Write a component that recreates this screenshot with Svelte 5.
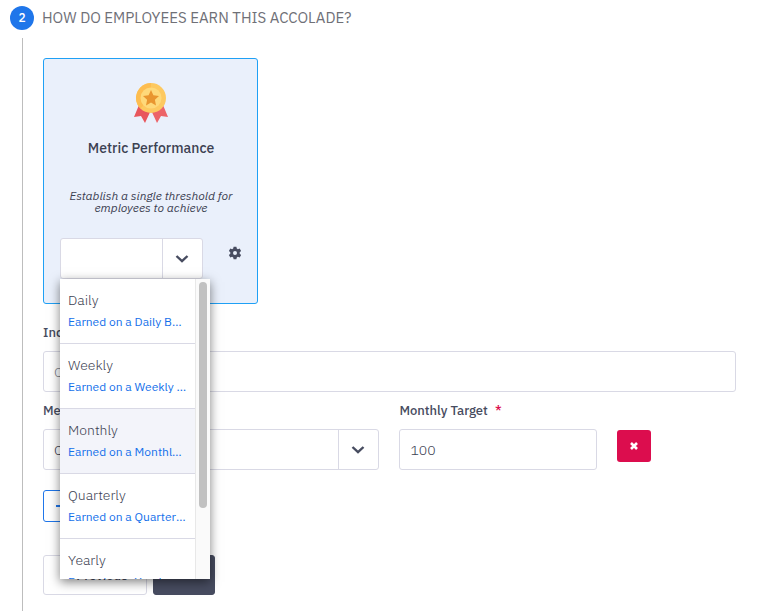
<script lang="ts">
  type Frequency = { name: string; detail: string };

  const frequencies: Frequency[] = [
    { name: "Daily", detail: "Earned on a Daily Basis" },
    { name: "Weekly", detail: "Earned on a Weekly Basis" },
    { name: "Monthly", detail: "Earned on a Monthly Basis" },
    { name: "Quarterly", detail: "Earned on a Quarterly Basis" },
    { name: "Yearly", detail: "Earned on a Yearly Basis" },
    { name: "One Time", detail: "Earned Only Once" },
  ];

  let open = $state(true);
  let frequency = $state("");
  let highlighted = $state("Monthly");
  let target = $state("100");

  // Scroll position and sizes of the open list, for its scrollbar
  let list: HTMLElement | undefined = $state();
  let thumbSize = $state(100);
  let thumbTop = $state(0);

  function updateThumb() {
    if (!list) return;
    thumbSize = (list.clientHeight / list.scrollHeight) * 100;
    thumbTop = (list.scrollTop / list.scrollHeight) * 100;
  }

  $effect(updateThumb);

  // Open our own list instead of the native popup
  function toggle(event: MouseEvent) {
    event.preventDefault();
    open = !open;
  }

  function choose(item: Frequency) {
    frequency = item.name;
    open = false;
  }
</script>

{#snippet chevron()}
  <span class="chevron">
    <svg width="14" height="10" viewBox="0 0 14 10" aria-hidden="true">
      <path d="M1.500 2 7 7.200 12.500 2" fill="none" stroke="currentColor" stroke-width="2.400" />
    </svg>
  </span>
{/snippet}

<section class="step">
  <header>
    <span class="number">2</span>
    <h2>HOW DO EMPLOYEES EARN THIS ACCOLADE?</h2>
  </header>

  <form class="body" onsubmit={(e) => e.preventDefault()}>
    <div class="card">
      <svg class="medal" width="40" height="40" viewBox="0 0 40 40" aria-hidden="true">
        <path d="M8 22 3 34l7-1 4 7 6-13z" fill="#e8565c" />
        <path d="M32 22l5 12-7-1-4 7-6-13z" fill="#ec6468" />
        <circle cx="20" cy="15" r="15" fill="#fdc960" />
        <path d="M9.400 25.600A15 15 0 0 1 20 0v15z" fill="#fdbd50" />
        <circle cx="20" cy="15" r="10.500" fill="#fed97a" />
        <path d="m20 7 2.400 5.200 5.600.700-4.100 3.900 1.100 5.600-5-2.800-5 2.800 1.100-5.600-4.100-3.900 5.600-.700z" fill="#e9962f" />
      </svg>
      <h3>Metric Performance</h3>
      <p>Establish a single threshold for employees to achieve</p>

      <div class="frequency">
        <div class="picker">
          <div class="select">
            <select aria-label="Frequency" bind:value={frequency} onmousedown={toggle}>
              <option value=""></option>
              {#each frequencies as item}
                <option>{item.name}</option>
              {/each}
            </select>
            {@render chevron()}
          </div>
          {#if open}
            <div class="menu">
              <div class="options" bind:this={list} onscroll={updateThumb}>
                {#each frequencies as item}
                  <button
                    type="button"
                    class="option"
                    class:active={item.name === highlighted}
                    onmouseenter={() => (highlighted = item.name)}
                    onclick={() => choose(item)}
                  >
                    <span class="name">{item.name}</span>
                    <span class="detail">{item.detail}</span>
                  </button>
                {/each}
              </div>
              <div class="scrollbar">
                <div class="track">
                  <div class="thumb" style="height: {thumbSize}%; top: {thumbTop}%"></div>
                </div>
              </div>
            </div>
          {/if}
        </div>
        <button type="button" class="settings" aria-label="Settings">
          <svg width="14" height="14" viewBox="0 0 14 14" aria-hidden="true">
            <path
              fill="currentColor"
              fill-rule="evenodd"
              d="M5.600.800h2.800l.400 1.800 1.100.600 1.800-.600 1.400 2.400-1.400 1.300v1.400l1.400 1.300-1.400 2.400-1.800-.600-1.100.600-.400 1.800H5.600l-.400-1.800-1.100-.600-1.800.600L.900 9l1.400-1.300V6.300L.900 5l1.400-2.400 1.800.600 1.100-.600zM7 5a2 2 0 1 0 0 4 2 2 0 0 0 0-4z"
            />
          </svg>
        </button>
      </div>
    </div>

    <div class="field">
      <label for="individual">Individual</label>
      <input id="individual" type="text" placeholder="Choose" />
    </div>

    <div class="metric-row">
      <div class="field">
        <label for="metric">Metric</label>
        <div class="select">
          <select id="metric">
            <option>Calls</option>
          </select>
          {@render chevron()}
        </div>
      </div>
      <div class="field">
        <label for="target">Monthly Target <span class="required">*</span></label>
        <input id="target" type="text" bind:value={target} />
      </div>
      <button type="button" class="remove" aria-label="Remove metric">
        <svg width="10" height="10" viewBox="0 0 10 10" aria-hidden="true">
          <path d="m2 2 6 6M8 2 2 8" stroke="currentColor" stroke-width="2.600" />
        </svg>
      </button>
    </div>

    <button type="button" class="add" aria-label="Add metric">
      <svg width="12" height="12" viewBox="0 0 12 12" aria-hidden="true">
        <path d="M6 1v10M0 6h12" stroke="currentColor" stroke-width="2" />
      </svg>
    </button>

    <div class="actions">
      <button type="button" class="previous">← Previous</button>
      <button type="submit" class="save" aria-label="Save">
        <svg width="14" height="12" viewBox="0 0 14 12" aria-hidden="true">
          <path d="m2 5 4 4 6-7" fill="none" stroke="currentColor" stroke-width="2" />
        </svg>
      </button>
    </div>
  </form>
</section>

<style>
  :global(body) {
    margin: 0;
    background: #fff;
  }

  .step {
    padding: 6px 23px 0 10px;
    font-family: "IBM Plex Sans", Roboto, "Liberation Sans", sans-serif;
    font-size: 14px;
    color: #474c60;
  }

  .step,
  .step * {
    box-sizing: border-box;
  }

  header {
    display: flex;
    align-items: center;
    gap: 8px;
  }

  .number {
    width: 24px;
    height: 24px;
    border-radius: 50%;
    background: #1f76ea;
    color: #fff;
    font-size: 12px;
    font-weight: 500;
    line-height: 24px;
    text-align: center;
  }

  h2 {
    margin: 0;
    font-size: 15px;
    font-weight: 400;
    line-height: 24px;
    color: #6f7077;
  }

  .body {
    margin: 8px 0 0 12px;
    padding: 20px 0 16px 20px;
    border-left: 1px solid #bdbdbd;
  }

  .card {
    width: 215px;
    height: 246px;
    padding: 24px 15px 24px 16px;
    border: 1px solid #1fa0f5;
    border-radius: 3px;
    background: #eaf0fb;
    text-align: center;
  }

  .medal {
    display: block;
    margin: 0 auto;
  }

  h3 {
    margin: 15px 0 0;
    font-size: 14px;
    font-weight: 500;
    line-height: 20px;
    color: #3c4152;
  }

  p {
    margin: 32px 0 24px;
    font-size: 12px;
    font-style: italic;
    line-height: 12px;
    color: #3c4152;
  }

  .frequency {
    display: flex;
    justify-content: space-between;
    align-items: flex-start;
  }

  .picker {
    position: relative;
    width: 143px;
  }

  input,
  select {
    display: block;
    width: 100%;
    height: 41px;
    padding: 0 10px;
    border: 1px solid #d9d9e5;
    border-radius: 3px;
    background: #fff;
    color: #3c4152;
    font: inherit;
    font-weight: 300;
    appearance: none;
  }

  input::placeholder {
    color: #7c7f8d;
  }

  .select {
    display: grid;
  }

  .select > * {
    grid-area: 1 / 1;
  }

  .chevron {
    justify-self: end;
    display: flex;
    align-items: center;
    justify-content: center;
    width: 41px;
    padding-right: 2px;
    border-left: 1px solid #d9d9e5;
    pointer-events: none;
  }

  .menu {
    position: absolute;
    z-index: 1;
    top: 100%;
    left: 0;
    display: flex;
    width: 150px;
    height: 300px;
    background: #fff;
    box-shadow: 0 3px 10px rgba(0, 0, 0, 0.5);
  }

  .options {
    flex: 1;
    min-width: 0;
    overflow-y: scroll;
    scrollbar-width: none;
  }

  .scrollbar {
    width: 15px;
    padding: 3px;
    border-left: 1px solid #e8e8e8;
    background: #fafafa;
  }

  .track {
    position: relative;
    height: 100%;
  }

  .thumb {
    position: absolute;
    width: 8px;
    border-radius: 4px;
    background: #c1c1c1;
  }

  .option {
    display: block;
    width: 100%;
    height: 65px;
    padding: 10px 8px;
    border: 0;
    border-bottom: 1px solid #d9d9e5;
    background: #fff;
    font: inherit;
    text-align: left;
    cursor: pointer;
  }

  .option.active {
    background: #f3f4fa;
  }

  .name,
  .detail {
    display: block;
    line-height: 22px;
  }

  .name {
    color: #3c4152;
    font-weight: 300;
  }

  .detail {
    overflow: hidden;
    font-size: 12px;
    color: #1470ea;
    text-overflow: ellipsis;
    white-space: nowrap;
  }

  .settings {
    margin-top: 8px;
    padding: 0;
    border: 0;
    background: none;
    color: #474c60;
    line-height: 0;
  }

  .field {
    margin-top: 19px;
  }

  label {
    display: block;
    margin-bottom: 8px;
    font-size: 13px;
    font-weight: 500;
    line-height: 20px;
  }

  .required {
    margin-left: 4px;
    color: #dc0d4e;
  }

  .metric-row {
    display: grid;
    grid-template-columns: 17fr 10fr 6fr;
    gap: 20px;
    margin-top: 9px;
  }

  .metric-row .field {
    margin: 0;
  }

  .remove {
    width: 34px;
    height: 32px;
    margin-top: 29px;
    padding: 0;
    border: 0;
    border-radius: 3px;
    background: #dc0d4e;
    color: #fff;
  }

  .add {
    display: block;
    height: 32px;
    margin-top: 20px;
    padding: 0 12px;
    border: 1px solid #1f76ea;
    border-radius: 3px;
    background: #fff;
    color: #1f76ea;
    line-height: 0;
  }

  .actions {
    display: flex;
    gap: 6px;
    margin-top: 33px;
  }

  .previous,
  .save {
    height: 40px;
    padding: 0 18px;
    border: 1px solid #d9d9e5;
    border-radius: 3px;
    background: #fff;
    color: #474c60;
    font: inherit;
    font-size: 13px;
    font-weight: 500;
  }

  .save {
    padding: 0 23px;
    border-color: #474c60;
    background: #474c60;
    color: #fff;
  }
</style>
